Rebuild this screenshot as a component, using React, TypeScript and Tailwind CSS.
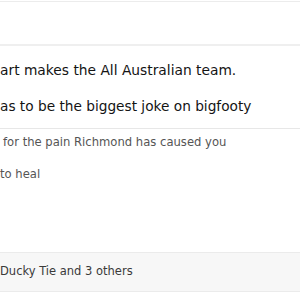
import React from 'react';

export default function App() {
  return (
    <div
      className="w-[300px] h-[300px] overflow-hidden bg-white"
      style={{ fontFamily: '"DejaVu Sans", Verdana, sans-serif' }}
    >
      <div className="h-px mt-px bg-[#ececec]" />
      <div className="h-[42px]" />
      <div className="h-[2px] bg-[#efefef]" />

      <div className="pt-[15px] text-[13.8px] leading-[18px] text-[#141414]">
        <p className="whitespace-nowrap">art makes the All Australian team.</p>
        <p className="mt-[18px] text-[13.7px] whitespace-nowrap">as to be the biggest joke on bigfooty</p>
      </div>

      <div className="mt-[13px] h-px bg-[#e7e7e7]" />

      <div className="pt-[4px] text-[11.6px] leading-[18px] text-[#555]">
        <p className="pl-[3px] whitespace-nowrap">for the pain Richmond has caused you</p>
        <p className="mt-[14px] whitespace-nowrap">to heal</p>
      </div>

      <div className="mt-[69px] border-y border-[#ebebeb] bg-[#f7f7f7] h-[40px] flex items-center">
        <span className="text-[11.5px] text-[#3a3a3a] whitespace-nowrap">Ducky Tie and 3 others</span>
      </div>
    </div>
  );
}
